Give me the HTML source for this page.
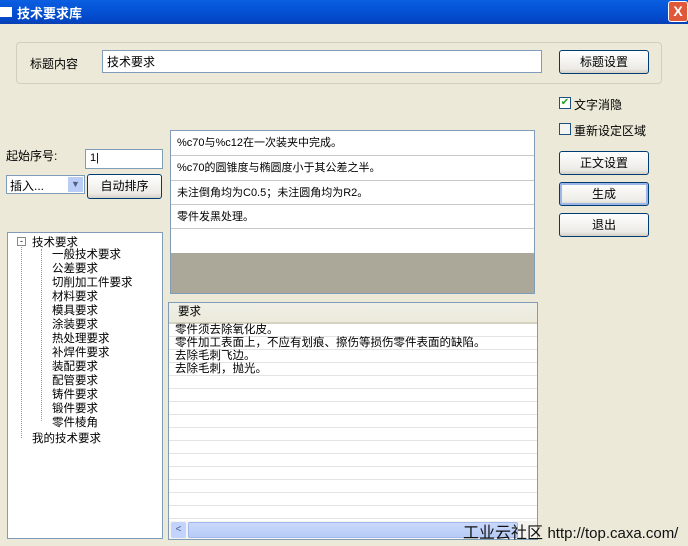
<!DOCTYPE html>
<html><head><meta charset="utf-8"><style>
*{box-sizing:border-box;margin:0;padding:0}
body{width:688px;height:546px;background:#ece9d8;position:relative;overflow:hidden;font-family:"Liberation Sans","SimSun","Noto Sans CJK SC",sans-serif;font-size:12px;color:#000}
.a{position:absolute}
.btn{position:absolute;border:1px solid #003c74;border-radius:3px;background:linear-gradient(#fff,#ecebe6 80%,#d6d0c5);text-align:center;font-size:12px}
.inp{position:absolute;background:#fff;border:1px solid #7f9db9}
.row{position:absolute;left:0;right:0;border-bottom:1px solid #c8c8c8;padding-left:6px;line-height:24px;font-size:11px}
.lr{height:13px;border-bottom:1px solid #e4e4e4;padding-left:6px;line-height:13px;font-size:11.5px;white-space:nowrap}
.t{position:absolute;left:44px;font-size:11.5px;line-height:14px}
</style></head><body>
<div class="a" style="left:0;top:0;width:688px;height:24px;background:linear-gradient(#0a5fe0,#0553d6 40%,#0346c6 85%,#0a3fb0)"></div>
<div class="a" style="left:0;top:7px;width:12px;height:10px;background:#fff"></div>
<div class="a" style="left:17px;top:3px;color:#fff;font-weight:bold;font-size:13px">技术要求库</div>
<div class="a" style="left:668px;top:1px;width:20px;height:21px;background:#e0583a;border:1px solid #fff;border-radius:3px;color:#fff;font-weight:bold;text-align:center;line-height:19px;font-size:14px">X</div>

<div class="a" style="left:16px;top:42px;width:646px;height:42px;border:1px solid #d0d0bf;border-radius:4px"></div>
<div class="a" style="left:30px;top:55px">标题内容</div>
<div class="inp" style="left:102px;top:50px;width:440px;height:23px;padding:2px 4px">技术要求</div>
<div class="btn" style="left:559px;top:50px;width:90px;height:24px;line-height:22px">标题设置</div>

<div class="a" style="left:559px;top:97px;width:12px;height:12px;border:1px solid #1c5180;background:#fff;color:#21a121;font-size:10px;line-height:10px;text-align:center">✔</div>
<div class="a" style="left:574px;top:96px">文字消隐</div>
<div class="a" style="left:559px;top:123px;width:12px;height:12px;border:1px solid #1c5180;background:#f4f4f0"></div>
<div class="a" style="left:574px;top:122px">重新设定区域</div>
<div class="btn" style="left:559px;top:151px;width:90px;height:24px;line-height:22px">正文设置</div>
<div class="btn" style="left:559px;top:182px;width:90px;height:24px;line-height:22px;box-shadow:inset 0 0 0 2px #9db6e8">生成</div>
<div class="btn" style="left:559px;top:213px;width:90px;height:24px;line-height:22px">退出</div>

<div class="a" style="left:6px;top:147px">起始序号:</div>
<div class="inp" style="left:85px;top:149px;width:78px;height:20px;padding:2px 4px;font-size:11px">1|</div>
<div class="inp" style="left:6px;top:175px;width:79px;height:19px;padding:1px 3px">插入...
<div class="a" style="right:1px;top:1px;width:15px;height:15px;background:#b9cdf6;color:#4d6185;font-size:9px;text-align:center;line-height:15px">▼</div></div>
<div class="btn" style="left:87px;top:174px;width:75px;height:25px;line-height:23px">自动排序</div>

<div class="a" style="left:7px;top:232px;width:156px;height:307px;background:#fff;border:1px solid #7f9db9">
<div class="a" style="left:13px;top:8px;width:1px;height:197px;border-left:1px dotted #999"></div>
<div class="a" style="left:9px;top:4px;width:9px;height:9px;border:1px solid #888;background:#fff;font-size:9px;line-height:6px;text-align:center">-</div>
<div class="a" style="left:24px;top:1px;font-size:11.5px">技术要求</div>
<div class="a" style="left:33px;top:16px;width:1px;height:172px;border-left:1px dotted #999"></div>
<div class="t" style="top:15px">一般技术要求</div>
<div class="t" style="top:29px">公差要求</div>
<div class="t" style="top:43px">切削加工件要求</div>
<div class="t" style="top:57px">材料要求</div>
<div class="t" style="top:71px">模具要求</div>
<div class="t" style="top:85px">涂装要求</div>
<div class="t" style="top:99px">热处理要求</div>
<div class="t" style="top:113px">补焊件要求</div>
<div class="t" style="top:127px">装配要求</div>
<div class="t" style="top:141px">配管要求</div>
<div class="t" style="top:155px">铸件要求</div>
<div class="t" style="top:169px">锻件要求</div>
<div class="t" style="top:183px">零件棱角</div>
<div class="a" style="left:24px;top:197px;font-size:11.5px">我的技术要求</div>
</div>

<div class="a" style="left:170px;top:130px;width:365px;height:164px;background:#aca899;border:1px solid #7f9db9">
<div class="a" style="left:0;top:0;width:363px;height:122px;background:#fff">
<div class="row" style="top:0;height:25px">%c70与%c12在一次装夹中完成。</div>
<div class="row" style="top:25px;height:25px">%c70的圆锥度与椭圆度小于其公差之半。</div>
<div class="row" style="top:50px;height:24px">未注倒角均为C0.5；未注圆角均为R2。</div>
<div class="row" style="top:74px;height:24px">零件发黑处理。</div>
</div></div>

<div class="a" style="left:168px;top:302px;width:370px;height:238px;background:#fff;border:1px solid #7f9db9;overflow:hidden">
<div style="height:21px;background:linear-gradient(#f0efe7,#ebeadb);border-bottom:2px solid #d6d2c2;padding-left:9px;line-height:19px;font-size:11.5px">要求</div>
<div class="lr">零件须去除氧化皮。</div>
<div class="lr">零件加工表面上，不应有划痕、擦伤等损伤零件表面的缺陷。</div>
<div class="lr">去除毛刺飞边。</div>
<div class="lr">去除毛刺，抛光。</div>
<div class="lr"></div><div class="lr"></div><div class="lr"></div><div class="lr"></div><div class="lr"></div><div class="lr"></div><div class="lr"></div><div class="lr"></div><div class="lr"></div><div class="lr"></div><div class="lr"></div>
<div class="a" style="left:0;top:218px;width:368px;height:18px;background:#f4f3ee">
<div class="a" style="left:2px;top:1px;width:15px;height:16px;background:#c3d3fd;border-radius:2px;color:#4d6185;font-size:10px;text-align:center;line-height:16px">&lt;</div>
<div class="a" style="left:19px;top:1px;width:330px;height:16px;background:linear-gradient(#cad8fb,#b6cbf6);border:1px solid #a4b9eb;border-radius:2px"></div>
</div></div>

<div class="a" style="left:463px;top:519px;font-size:16px;color:#111;white-space:nowrap">工业云社区 <span style="font-size:15px">http://top.caxa.com/</span></div>
</body></html>
